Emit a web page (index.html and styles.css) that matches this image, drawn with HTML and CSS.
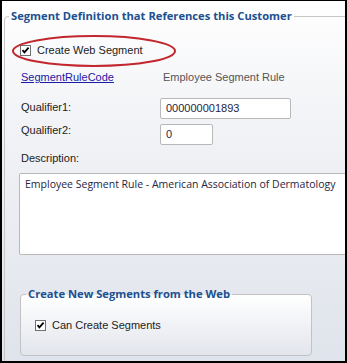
FILE: index.html
```html
<!DOCTYPE html>
<html>
<head>
<meta charset="utf-8">
<link rel="stylesheet" href="styles.css">
</head>
<body>
<div class="frame">
  <fieldset class="group">
    <legend class="legend">Segment Definition that References this Customer</legend>
    <div class="body">
      <div class="check-row">
        <span class="cb"><svg width="11" height="11" viewBox="0 0 11 11"><rect x="0.5" y="0.5" width="10" height="10" fill="#fff" stroke="#707070"/><path d="M2.5 5.2 L4.4 7.3 L8.6 2.6" fill="none" stroke="#000" stroke-width="1.8"/></svg></span>
        <span class="label">Create Web Segment</span>
      </div>
      <div class="link-row">
        <a class="link" href="#">SegmentRuleCode</a>
        <span class="value">Employee Segment Rule</span>
      </div>
      <div class="field-row r1">
        <span class="label fl1">Qualifier1:</span>
        <span class="input wide">000000001893</span>
      </div>
      <div class="field-row r2">
        <span class="label fl2">Qualifier2:</span>
        <span class="input narrow">0</span>
      </div>
      <div class="label desc-label">Description:</div>
      <div class="textarea">Employee Segment Rule - American Association of Dermatology</div>
      <fieldset class="group2">
        <legend class="legend legend2">Create New Segments from the Web</legend>
        <div class="check-row cr2">
          <span class="cb"><svg width="11" height="11" viewBox="0 0 11 11"><rect x="0.5" y="0.5" width="10" height="10" fill="#fff" stroke="#707070"/><path d="M2.5 5.2 L4.4 7.3 L8.6 2.6" fill="none" stroke="#000" stroke-width="1.8"/></svg></span>
          <span class="label">Can Create Segments</span>
        </div>
      </fieldset>
    </div>
  </fieldset>
  <svg class="highlight" width="168" height="36" viewBox="0 0 168 36"><ellipse cx="84" cy="17" rx="81" ry="15" fill="none" stroke="#c1272d" stroke-width="2"/></svg>
</div>
</body>
</html>
```
FILE: styles.css
```css
html, body {
  margin: 0;
  padding: 0;
}
.frame {
  position: relative;
  width: 347px;
  height: 363px;
  box-sizing: border-box;
  border-style: solid;
  border-color: #000;
  border-width: 1px 2px 2px 2px;
  background: linear-gradient(to bottom, #ffffff 0%, #f3f4f7 30%, #dfe3eb 100%);
  overflow: hidden;
  font-family: "Liberation Sans", Arial, sans-serif;
  font-size: 11px;
  color: #222;
}
.group {
  margin: 7px 0 0 2px;
  padding: 0 0 40px 0;
  width: 380px;
  border: 1px solid #c6c6c6;
  border-radius: 4px 0 0 0;
  min-inline-size: 0;
}
.legend {
  margin-left: 4px;
  padding: 0 2px;
  font-family: "Open Sans", sans-serif;
  font-weight: bold;
  font-size: 11.2px;
  line-height: 16px;
  color: #20508f;
}
.body {
  padding-left: 16px;
}
.label {
  line-height: 13px;
}
.check-row {
  display: flex;
  align-items: center;
  height: 13px;
  margin-top: 20px;
}
.cb {
  display: block;
  width: 11px;
  height: 11px;
  margin-left: -1px;
  margin-right: 6px;
}
.cb svg {
  display: block;
}
.link-row {
  display: flex;
  margin-top: 14px;
  line-height: 13px;
}
.link {
  width: 142px;
  color: #1a1aa6;
  text-decoration: underline;
}
.value {
  color: #555;
}
.field-row {
  display: flex;
  align-items: flex-start;
}
.r1 {
  margin-top: 14px;
}
.r2 {
  margin-top: 5px;
}
.fl1, .fl2 {
  width: 139px;
}
.fl1 {
  padding-top: 3px;
}
.input {
  box-sizing: border-box;
  height: 21px;
  border: 1px solid #b8b8b8;
  border-radius: 2px;
  background: #fff;
  padding-left: 5px;
  line-height: 19px;
  color: #1f2544;
}
.wide {
  width: 131px;
}
.narrow {
  width: 53px;
}
.desc-label {
  margin-top: 7px;
}
.textarea {
  box-sizing: border-box;
  margin: 8px 0 0 -2px;
  width: 380px;
  height: 82px;
  border: 1px solid #b8b8b8;
  border-radius: 2px;
  background: #fff;
  padding: 2px 5px;
  font-family: "Open Sans", sans-serif;
  font-size: 10.5px;
  line-height: 16px;
  color: #1f2544;
  white-space: nowrap;
}
.group2 {
  margin: 31px 0 0 -1px;
  padding: 0 0 0 0;
  width: 292px;
  height: 70px;
  box-sizing: border-box;
  border: 1px solid #c2c2c2;
  border-radius: 4px;
  background: linear-gradient(to bottom, #ffffff 0%, #e2e5ec 100%);
  min-inline-size: 0;
}
.legend2 {
  margin-left: 5px;
}
.cr2 {
  margin-top: 17px;
  padding-left: 15px;
}
.highlight {
  position: absolute;
  left: 8px;
  top: 33px;
}
```
